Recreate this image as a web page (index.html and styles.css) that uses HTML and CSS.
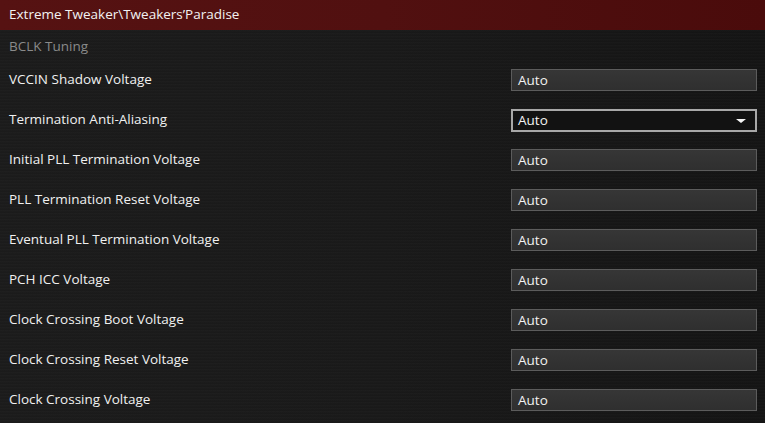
FILE: index.html
```html
<!DOCTYPE html>
<html>
<head>
<meta charset="utf-8">
<link rel="stylesheet" href="styles.css">
</head>
<body>
<div class="page">
  <div class="header">Extreme Tweaker\Tweakers’Paradise</div>
  <div class="section">BCLK Tuning</div>
  <div class="row"><span class="label">VCCIN Shadow Voltage</span><div class="field">Auto</div></div>
  <div class="row"><span class="label">Termination Anti-Aliasing</span><div class="field select">Auto<span class="arrow"></span></div></div>
  <div class="row"><span class="label">Initial PLL Termination Voltage</span><div class="field">Auto</div></div>
  <div class="row"><span class="label">PLL Termination Reset Voltage</span><div class="field">Auto</div></div>
  <div class="row"><span class="label">Eventual PLL Termination Voltage</span><div class="field">Auto</div></div>
  <div class="row"><span class="label">PCH ICC Voltage</span><div class="field">Auto</div></div>
  <div class="row"><span class="label">Clock Crossing Boot Voltage</span><div class="field">Auto</div></div>
  <div class="row"><span class="label">Clock Crossing Reset Voltage</span><div class="field">Auto</div></div>
  <div class="row"><span class="label">Clock Crossing Voltage</span><div class="field">Auto</div></div>
</div>
</body>
</html>
```
FILE: styles.css
```css
html, body {
  margin: 0;
  padding: 0;
  background: #171717;
}
.page {
  width: 765px;
  height: 423px;
  overflow: hidden;
  font-family: "Open Sans", "Noto Sans", sans-serif;
  font-size: 13.5px;
  color: #f0f0f0;
  background:
    repeating-linear-gradient(180deg, rgba(255,255,255,0.015) 0px, rgba(255,255,255,0.015) 1px, rgba(0,0,0,0.03) 2px, rgba(0,0,0,0) 3px),
    linear-gradient(90deg, #1b1b1b 0%, #191919 50%, #141414 100%);
}
.header {
  height: 30px;
  line-height: 29px;
  padding-left: 9px;
  background: linear-gradient(90deg, #561212 0%, #511010 50%, #4a0b0b 100%);
  color: #f2f2f2;
}
.section {
  height: 30px;
  line-height: 33px;
  padding-left: 9px;
  color: #8a8a8a;
}
.row {
  height: 40px;
  display: flex;
  align-items: center;
  justify-content: space-between;
  padding: 0 8px 0 9px;
}
.label {
  margin-top: -2px;
}
.field {
  box-sizing: border-box;
  width: 246px;
  height: 22px;
  margin-top: 0;
  border: 1px solid #5c5c5c;
  background: linear-gradient(180deg, #363636, #2f2f2f);
  padding-left: 6px;
  line-height: 20px;
  color: #f2f2f2;
  position: relative;
}
.field.select {
  height: 23px;
  margin-top: 1px;
  border: 2px solid #a8a8a8;
  background: #121212;
  padding-left: 5px;
  line-height: 19px;
}
.arrow {
  position: absolute;
  right: 9px;
  top: 8px;
  width: 0;
  height: 0;
  border-left: 5px solid transparent;
  border-right: 5px solid transparent;
  border-top: 4px solid #f5f5f5;
}
```
